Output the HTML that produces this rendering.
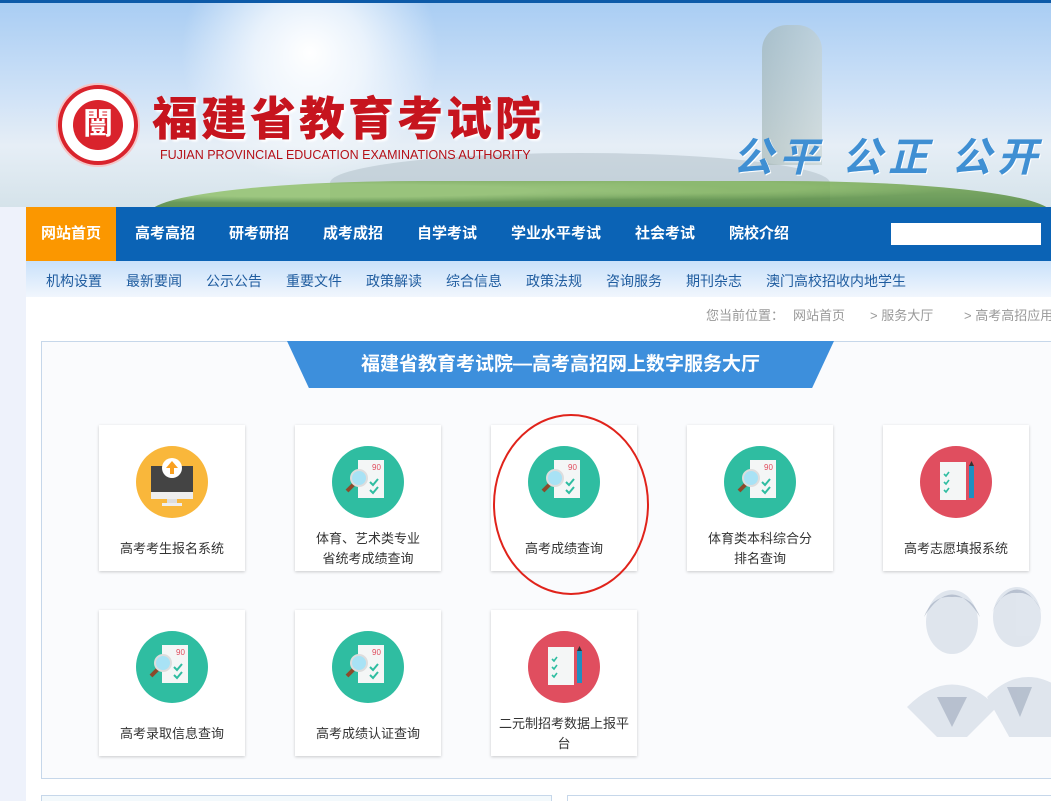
<!DOCTYPE html>
<html><head><meta charset="utf-8"><style>
*{margin:0;padding:0;box-sizing:border-box}
html,body{width:1051px;height:801px;overflow:hidden}
body{background:#eef2fb;font-family:"Liberation Sans","Noto Sans CJK SC",sans-serif;position:relative}
.hdr{position:absolute;left:0;top:0;width:1051px;height:207px;border-top:3px solid #0d5aa8;background:linear-gradient(180deg,#a9cdf3 0%,#cfe2f7 45%,#e6eef6 70%,#d5e3ea 100%);overflow:hidden}
.sun{position:absolute;left:180px;top:-80px;width:260px;height:260px;border-radius:50%;background:radial-gradient(circle,#fff 0%,rgba(255,255,255,.7) 30%,rgba(255,255,255,0) 70%)}
.trees{position:absolute;left:150px;top:178px;width:901px;height:32px;background:radial-gradient(ellipse at 20% 30%,#8fc066 0 20%,transparent 40%),radial-gradient(ellipse at 60% 20%,#7fb356 0 15%,transparent 35%),linear-gradient(180deg,#6fa24a,#3f7a2c);border-radius:30% 30% 0 0/100% 100% 0 0;opacity:.8}
.mtn{position:absolute;left:330px;top:150px;width:500px;height:60px;background:#a9b9c2;border-radius:50% 50% 0 0;opacity:.45}
.rock{position:absolute;left:762px;top:22px;width:60px;height:140px;background:linear-gradient(90deg,#9fb2b0,#c4d0cd);border-radius:25px 25px 0 0;opacity:.6}
.logo{position:absolute;left:58px;top:82px;width:80px;height:80px;border-radius:50%;background:#fff;border:4px solid #d9232c;box-shadow:0 0 0 2px #f4c5c7}
.logo i{position:absolute;left:11px;top:11px;width:50px;height:50px;border-radius:50%;background:#d9232c;color:#fff;font-style:normal;font-size:30px;text-align:center;line-height:50px;font-weight:bold}
.title{position:absolute;left:152px;top:80px;font-family:"Noto Sans CJK SC",sans-serif;font-weight:900;font-size:46px;color:#c6141e;letter-spacing:3px;text-shadow:2px 2px 2px #fff}
.en{position:absolute;left:160px;top:145px;font-size:12.5px;color:#b51018}
.slogan{position:absolute;left:733px;top:122px;font-size:40px;color:#3f8fd3;font-weight:bold;letter-spacing:6px;font-style:italic;text-shadow:1px 1px 0 #fff}
.nav{position:absolute;left:26px;top:207px;width:1025px;height:54px;background:#0b63b5}
.nav a{position:absolute;top:0;height:54px;line-height:54px;color:#fff;font-weight:bold;font-size:15px;text-decoration:none}
.nav .home{left:0;width:90px;background:#fb9700;text-align:center}
.srch{position:absolute;left:865px;top:16px;width:150px;height:22px;background:#fff}
.sub{position:absolute;left:26px;top:261px;width:1025px;height:36px;background:linear-gradient(180deg,#c9e1fa,#f1f6fd)}
.sub span{position:absolute;top:10px;font-size:14px;color:#1f5c9f}
.main{position:absolute;left:26px;top:297px;width:1025px;height:504px;background:#fff}
.bc{position:absolute;top:305px;font-size:13px;color:#999;white-space:nowrap}
.panel{position:absolute;left:41px;top:341px;width:1020px;height:438px;border:1px solid #c6d7ea;background:#fafbfd;overflow:hidden}
.ban{position:absolute;left:287px;top:341px;width:547px;height:47px;background:#3d8fdc;clip-path:polygon(0 0,100% 0,96% 100%,4% 100%);color:#fff;font-weight:bold;font-size:19px;text-align:center;line-height:47px}
.card{position:absolute;width:146px;height:146px;background:#fff;box-shadow:0 1px 3px rgba(0,0,0,.2);text-align:center}
.card svg{position:absolute;left:37px;top:21px}
.card p{position:absolute;left:0;right:0;font-size:13px;color:#333;line-height:20px}
.ell{position:absolute;left:493px;top:414px;width:156px;height:181px;border:2px solid #e0231b;border-radius:50%}
.box{position:absolute;top:795px;height:20px;border:1px solid #c6d7ea;background:#f3f9fc}
</style></head><body>
<div class="hdr"><div class="sun"></div><div class="mtn"></div><div class="rock"></div><div class="trees"></div>
<div class="logo"><i>闓</i></div>
<div class="title">福建省教育考试院</div>
<div class="en">FUJIAN PROVINCIAL EDUCATION EXAMINATIONS AUTHORITY</div>
<div class="slogan">公平 公正 公开</div></div>
<div class="nav"><a class="home">网站首页</a><a style="left:109px">高考高招</a><a style="left:203px">研考研招</a><a style="left:297px">成考成招</a><a style="left:391px">自学考试</a><a style="left:485px">学业水平考试</a><a style="left:609px">社会考试</a><a style="left:703px">院校介绍</a><div class="srch"></div></div>
<div class="sub"><span style="left:20px">机构设置</span><span style="left:100px">最新要闻</span><span style="left:180px">公示公告</span><span style="left:260px">重要文件</span><span style="left:340px">政策解读</span><span style="left:420px">综合信息</span><span style="left:500px">政策法规</span><span style="left:580px">咨询服务</span><span style="left:660px">期刊杂志</span><span style="left:740px">澳门高校招收内地学生</span></div>
<div class="main"></div>
<span class="bc" style="left:706px">您当前位置：</span><span class="bc" style="left:793px">网站首页</span><span class="bc" style="left:870px">&gt; 服务大厅</span><span class="bc" style="left:964px">&gt; 高考高招应用</span>
<div class="panel">
<svg style="position:absolute;left:860px;top:225px" width="170" height="170"><g fill="#dde3ec" opacity=".9"><ellipse cx="50" cy="55" rx="26" ry="32"/><ellipse cx="115" cy="50" rx="24" ry="30"/><path d="M5 140 Q50 95 95 140 L60 175 L40 175Z"/><path d="M85 130 Q125 90 170 130 L150 175 L110 175Z"/></g><g fill="#8795ab" opacity=".45"><path d="M22 50 Q50 5 78 50 Q70 28 50 30 Q30 28 22 50Z"/><path d="M90 45 Q115 0 140 45 Q130 24 115 26 Q100 24 90 45Z"/><path d="M35 130 L50 160 L65 130Z"/><path d="M105 120 L118 150 L130 120Z"/></g></svg>
</div>
<div class="ban">福建省教育考试院—高考高招网上数字服务大厅</div>
<svg width="0" height="0" style="position:absolute"><defs>
<g id="g"><circle cx="36" cy="36" r="36" fill="#2fbda1"/><rect x="26" y="14" width="26" height="38" fill="#f4f6f6"/><text x="40" y="24" font-size="8" fill="#e04e5f" font-family="Liberation Sans">90</text><path d="M38 36l3 3 5-6M38 44l3 3 5-6" stroke="#2fbda1" stroke-width="2" fill="none"/><line x1="15" y1="45" x2="22" y2="38" stroke="#8b4a2b" stroke-width="4"/><circle cx="27" cy="32" r="8" fill="#a8e2f5" stroke="#ddd" stroke-width="2"/></g>
<g id="r"><circle cx="36" cy="36" r="36" fill="#e04e5f"/><rect x="20" y="16" width="26" height="38" fill="#f4f6f6"/><path d="M24 28l2 2 3-4M24 36l2 2 3-4M24 44l2 2 3-4" stroke="#2fbda1" stroke-width="1.6" fill="none"/><rect x="49" y="20" width="5" height="32" fill="#1f8fc0"/><path d="M49 20l2.5-5 2.5 5z" fill="#333"/></g>
<g id="y"><circle cx="36" cy="36" r="36" fill="#f9b73b"/><rect x="15" y="20" width="42" height="26" fill="#444"/><rect x="15" y="46" width="42" height="7" fill="#eee"/><rect x="31" y="53" width="10" height="4" fill="#ddd"/><rect x="26" y="57" width="20" height="3" fill="#eee"/><circle cx="36" cy="22" r="10" fill="#fff"/><path d="M36 15l-6 7h4v6h4v-6h4z" fill="#f9a020"/></g>
</defs></svg>
<div class="card" style="left:99px;top:425px"><svg width="72" height="72"><use href="#y"/></svg><p style="top:114px">高考考生报名系统</p></div>
<div class="card" style="left:295px;top:425px"><svg width="72" height="72"><use href="#g"/></svg><p style="top:104px">体育、艺术类专业<br>省统考成绩查询</p></div>
<div class="card" style="left:491px;top:425px"><svg width="72" height="72"><use href="#g"/></svg><p style="top:114px">高考成绩查询</p></div>
<div class="card" style="left:687px;top:425px"><svg width="72" height="72"><use href="#g"/></svg><p style="top:104px">体育类本科综合分<br>排名查询</p></div>
<div class="card" style="left:883px;top:425px"><svg width="72" height="72"><use href="#r"/></svg><p style="top:114px">高考志愿填报系统</p></div>
<div class="card" style="left:99px;top:610px"><svg width="72" height="72"><use href="#g"/></svg><p style="top:114px">高考录取信息查询</p></div>
<div class="card" style="left:295px;top:610px"><svg width="72" height="72"><use href="#g"/></svg><p style="top:114px">高考成绩认证查询</p></div>
<div class="card" style="left:491px;top:610px"><svg width="72" height="72"><use href="#r"/></svg><p style="top:104px">二元制招考数据上报平<br>台</p></div>
<div class="ell"></div>
<div class="box" style="left:41px;width:511px"></div>
<div class="box" style="left:567px;width:500px;background:#fff"></div>
</body></html>
